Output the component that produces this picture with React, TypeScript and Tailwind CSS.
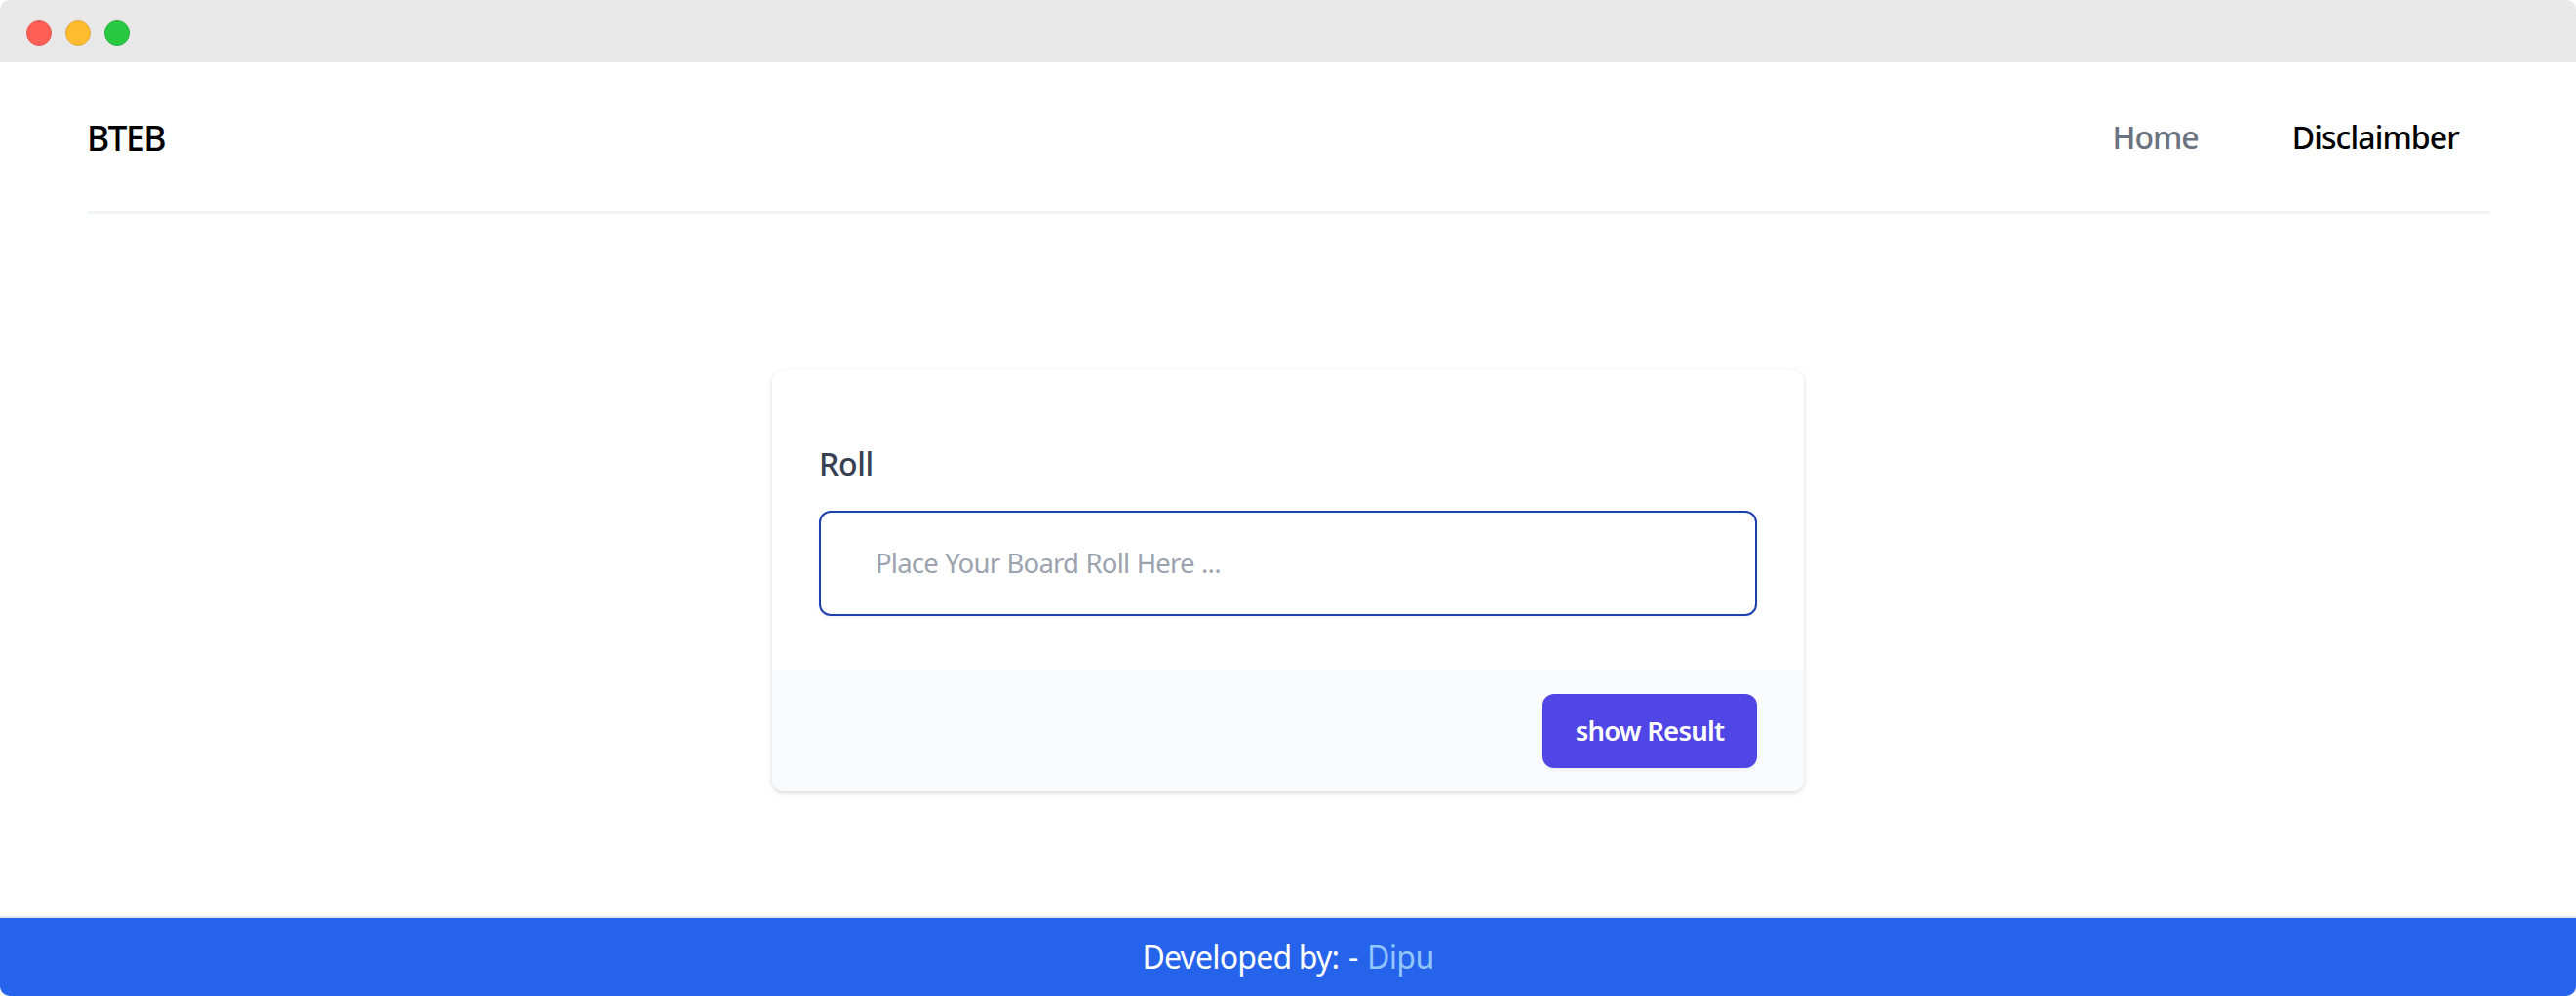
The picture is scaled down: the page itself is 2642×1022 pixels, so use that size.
export default function App() {
  return (
    <div className="flex h-[1022px] w-full flex-col overflow-hidden rounded-[10px] bg-white font-['Noto_Sans','Open_Sans',sans-serif]">
      <div className="flex h-16 shrink-0 items-center gap-3.5 bg-[#e8e8e8] pt-1 pl-[27px]">
        <span className="size-[26px] rounded-full border border-[#e95550] bg-[#ff5f57]" />
        <span className="size-[26px] rounded-full border border-[#e2a83d] bg-[#febc2e]" />
        <span className="size-[26px] rounded-full border border-[#24ad42] bg-[#28c840]" />
      </div>

      <header className="mr-[88px] ml-[90px] flex h-[156px] shrink-0 items-center justify-between border-b-4 border-gray-100 pt-0.5 pr-8">
        <a className="-ml-px text-[35.5px] leading-[56px] font-medium tracking-[-1.6px] text-black">BTEB</a>
        <nav className="flex gap-24 text-[32px] leading-[48px] font-medium">
          <a className="tracking-[-1px] text-[#6b7280]">Home</a>
          <a className="tracking-[-0.87px] text-black">Disclaimber</a>
        </nav>
      </header>

      <main className="flex flex-1 justify-center pt-40">
        <form className="h-[432px] w-[1058px] overflow-hidden rounded-[12px] bg-white shadow-[0_2px_6px_rgba(0,0,0,0.1),0_2px_4px_rgba(0,0,0,0.06)]">
          <div className="flex h-[308px] flex-col px-12 pt-[72px]">
            <label className="text-[32px] leading-[48px] font-medium tracking-[-0.3px] text-[#374151]">Roll</label>
            <div className="mt-6 flex h-[108px] items-center rounded-[12px] border-2 border-[#1e40af] px-14 text-[27.5px] leading-[40px] tracking-[-0.8px] text-[#9ca3af] shadow-[0_2px_4px_rgba(0,0,0,0.05)] [word-spacing:1px]">
              <span>Place Your Board Roll Here ...</span>
            </div>
          </div>
          <div className="flex h-[124px] items-center justify-end bg-[#f9fafb] px-12">
            <button type="button" className="flex h-[76px] w-[220px] items-center justify-center rounded-[12px] bg-[#4f46e5] pb-px text-[27.5px] leading-[40px] font-semibold tracking-[-0.8px] text-white shadow-[0_2px_4px_rgba(0,0,0,0.05)]">
              <span>show Result</span>
            </button>
          </div>
        </form>
      </main>

      <footer className="flex h-[82px] shrink-0 items-center justify-center border-t-2 border-[#e5e7eb] bg-[#2563eb] text-[32px] leading-[48px] text-white">
        <p className="tracking-[-0.8px]">
          Developed by: <span className="mx-0.5">-</span> <a className="tracking-[-0.6px] text-[#93c5fd]">Dipu</a>
        </p>
      </footer>
    </div>
  );
}
